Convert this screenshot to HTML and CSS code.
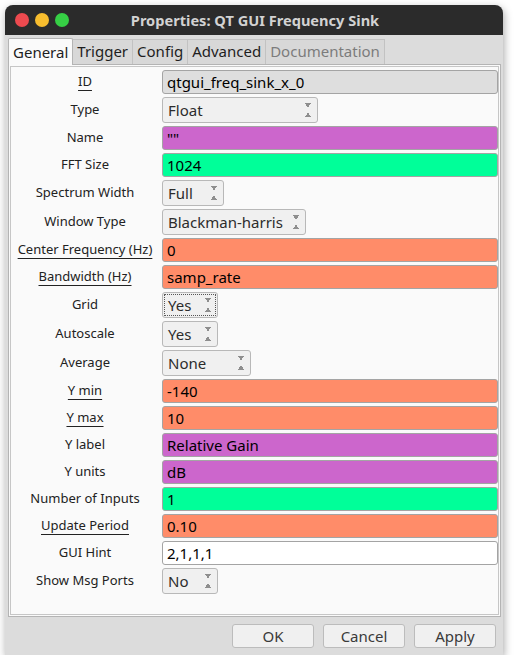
FILE: index.html
```html
<!DOCTYPE html>
<html lang="en">

<head>
    <meta charset="UTF-8">
    <title>Properties: QT GUI Frequency Sink</title>
    <link rel="stylesheet" href="styles.css">
</head>

<body>
    <div class="window">
        <div class="titlebar">
            <div class="lights">
                <span class="light light-close"></span>
                <span class="light light-min"></span>
                <span class="light light-max"></span>
            </div>
            <div class="title">Properties: QT GUI Frequency Sink</div>
        </div>

        <div class="tabs">
            <div class="tab tab-active">General</div>
            <div class="tab">Trigger</div>
            <div class="tab">Config</div>
            <div class="tab">Advanced</div>
            <div class="tab tab-disabled">Documentation</div>
        </div>

        <div class="pane">
            <div class="frame">
                <div class="form">
                    <div class="label ul">ID</div>
                    <div class="edit edit-readonly">qtgui_freq_sink_x_0</div>

                    <div class="label">Type</div>
                    <div class="combo w-float">Float<span class="spin"></span></div>

                    <div class="label">Name</div>
                    <div class="edit c-string">""</div>

                    <div class="label">FFT Size</div>
                    <div class="edit c-int">1024</div>

                    <div class="label">Spectrum Width</div>
                    <div class="combo w-full">Full<span class="spin"></span></div>

                    <div class="label">Window Type</div>
                    <div class="combo w-window">Blackman-harris<span class="spin"></span></div>

                    <div class="label ul">Center Frequency (Hz)</div>
                    <div class="edit c-float">0</div>

                    <div class="label ul">Bandwidth (Hz)</div>
                    <div class="edit c-float">samp_rate</div>

                    <div class="label">Grid</div>
                    <div class="combo w-yes focused">Yes<span class="spin"></span></div>

                    <div class="label">Autoscale</div>
                    <div class="combo w-yes">Yes<span class="spin"></span></div>

                    <div class="label">Average</div>
                    <div class="combo w-none">None<span class="spin"></span></div>

                    <div class="label ul">Y min</div>
                    <div class="edit c-float">-140</div>

                    <div class="label ul">Y max</div>
                    <div class="edit c-float">10</div>

                    <div class="label">Y label</div>
                    <div class="edit c-string">Relative Gain</div>

                    <div class="label">Y units</div>
                    <div class="edit c-string">dB</div>

                    <div class="label">Number of Inputs</div>
                    <div class="edit c-int">1</div>

                    <div class="label ul">Update Period</div>
                    <div class="edit c-float">0.10</div>

                    <div class="label">GUI Hint</div>
                    <div class="edit">2,1,1,1</div>

                    <div class="label">Show Msg Ports</div>
                    <div class="combo w-yes">No<span class="spin"></span></div>
                </div>
            </div>
        </div>

        <div class="buttons">
            <div class="btn">OK</div>
            <div class="btn">Cancel</div>
            <div class="btn">Apply</div>
        </div>
    </div>
</body>

</html>
```

FILE: styles.css
```css
body {
    margin: 0;
    background-color: #ffffff;
    font-family: "Noto Sans", "Open Sans", sans-serif;
    color: #1e1e1e;
}

.window {
    margin: 5px 0 0 5px;
    width: 498px;
    height: 650px;
    background-color: #dcdcdc;
    border-radius: 8px 8px 0 0;
    box-shadow: 1px 3px 8px rgba(0, 0, 0, 0.35);
    display: flex;
    flex-direction: column;
}

.titlebar {
    height: 30px;
    background-color: #2b2b2b;
    border-radius: 8px 8px 0 0;
    display: flex;
    align-items: center;
    position: relative;
}

.lights {
    display: flex;
    gap: 6px;
    padding-left: 10px;
}

.light {
    width: 14px;
    height: 14px;
    border-radius: 50%;
}

.light-close {
    background-color: #ed4a4f;
}

.light-min {
    background-color: #f7bd2e;
}

.light-max {
    background-color: #36cf45;
}

.title {
    position: absolute;
    left: 0;
    right: 0;
    text-align: center;
    font-size: 14.6px;
    font-weight: bold;
    color: #d2d2d2;
    padding-left: 2px;
}

.tabs {
    display: flex;
    align-items: flex-end;
    height: 29px;
    padding-left: 3px;
}

.tab {
    height: 24px;
    line-height: 23px;
    padding: 0 4px;
    font-size: 15px;
    background-color: #d8d8d8;
    border: 1px solid #c2c2c2;
    border-bottom: none;
}

.tab + .tab {
    border-left: none;
}

.tab-active {
    height: 26px;
    line-height: 27px;
    background-color: #fafafa;
    border-color: #b4b4b4;
    border-radius: 2px 2px 0 0;
    position: relative;
    top: 1px;
    z-index: 1;
}

.tab-disabled {
    color: #7c7c7c;
}

.pane {
    margin: 0 2px 0 3px;
    height: 549px;
    border: 1px solid #b4b4b4;
    padding: 1px;
    background-color: #fafafa;
}

.frame {
    height: 100%;
    box-sizing: border-box;
    border: 1px solid #c6c6c6;
}

.form {
    display: grid;
    grid-template-columns: 148px 1fr;
    column-gap: 3px;
    row-gap: 3px;
    padding-top: 3px;
}

.label {
    font-size: 13px;
    line-height: 16px;
    text-align: center;
    align-self: center;
    color: #222222;
    margin-top: -2px;
}

.ul {
    text-decoration: underline;
    text-underline-offset: 4px;
}

.edit {
    height: 24px;
    box-sizing: border-box;
    border: 1px solid #a4a4a4;
    border-radius: 3px;
    background-color: #ffffff;
    padding-left: 4px;
    font-size: 15px;
    line-height: 22px;
    color: #000000;
}

.edit-readonly {
    background-color: #dedede;
}

.c-string {
    background-color: #cc66cc;
}

.c-int {
    background-color: #00ff99;
}

.c-float {
    background-color: #ff8c69;
}

.combo {
    height: 26px;
    box-sizing: border-box;
    border: 1px solid #b8b8b8;
    border-radius: 3px;
    background-color: #f0f0f0;
    padding-left: 5px;
    font-size: 15px;
    line-height: 24px;
    color: #2c2c2c;
    display: flex;
    justify-content: space-between;
    align-items: center;
}

.spin {
    width: 18px;
    height: 16px;
    background:
        linear-gradient(to top right, transparent 50%, #8e8e8e 50%) 6px 1px / 3px 5px no-repeat,
        linear-gradient(to top left, transparent 50%, #8e8e8e 50%) 9px 1px / 3px 5px no-repeat,
        linear-gradient(to bottom right, transparent 50%, #8e8e8e 50%) 6px 10px / 3px 5px no-repeat,
        linear-gradient(to bottom left, transparent 50%, #8e8e8e 50%) 9px 10px / 3px 5px no-repeat;
}

.focused {
    outline: 1px dotted #555555;
    outline-offset: -3px;
}

.w-float {
    width: 156px;
}

.w-full {
    width: 62px;
}

.w-window {
    width: 144px;
}

.w-yes {
    width: 56px;
}

.w-none {
    width: 89px;
}

.buttons {
    display: flex;
    justify-content: flex-end;
    gap: 9px;
    padding: 7px 7px 0 0;
}

.btn {
    width: 82px;
    height: 24px;
    box-sizing: border-box;
    border: 1px solid #bcbcbc;
    border-radius: 3px;
    background-color: #f0f0f0;
    text-align: center;
    font-size: 15px;
    line-height: 22px;
    color: #3a3a3a;
}
```
